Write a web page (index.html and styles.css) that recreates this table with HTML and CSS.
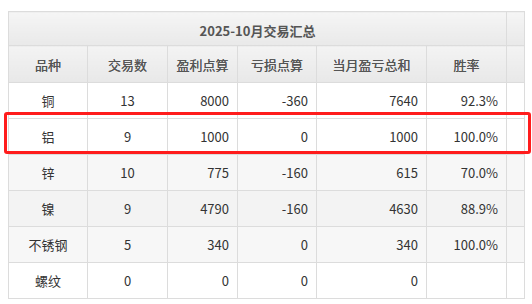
FILE: index.html
```html
<!DOCTYPE html>
<html lang="zh-CN">
<head>
<meta charset="utf-8">
<link rel="stylesheet" href="styles.css">
</head>
<body>
<div class="wrap">
  <table class="summary">
    <colgroup>
      <col class="c1"><col class="c2"><col class="c3"><col class="c4"><col class="c5"><col class="c6"><col class="c7">
    </colgroup>
    <thead>
      <tr class="title-row"><th colspan="6">2025-10月交易汇总</th><th></th></tr>
      <tr class="head-row"><th>品种</th><th>交易数</th><th>盈利点算</th><th>亏损点算</th><th>当月盈亏总和</th><th>胜率</th><th></th></tr>
    </thead>
    <tbody>
      <tr><td class="ctr">铜</td><td class="ctr">13</td><td class="num">8000</td><td class="num">-360</td><td class="num">7640</td><td class="num">92.3%</td><td></td></tr>
      <tr><td class="ctr">铝</td><td class="ctr">9</td><td class="num">1000</td><td class="num">0</td><td class="num">1000</td><td class="num">100.0%</td><td></td></tr>
      <tr class="alt"><td class="ctr">锌</td><td class="ctr">10</td><td class="num">775</td><td class="num">-160</td><td class="num">615</td><td class="num">70.0%</td><td></td></tr>
      <tr class="alt2"><td class="ctr">镍</td><td class="ctr">9</td><td class="num">4790</td><td class="num">-160</td><td class="num">4630</td><td class="num">88.9%</td><td></td></tr>
      <tr class="alt"><td class="ctr">不锈钢</td><td class="ctr">5</td><td class="num">340</td><td class="num">0</td><td class="num">340</td><td class="num">100.0%</td><td></td></tr>
      <tr><td class="ctr">螺纹</td><td class="ctr">0</td><td class="num">0</td><td class="num">0</td><td class="num">0</td><td class="num"></td><td></td></tr>
    </tbody>
  </table>
  <div class="highlight"></div>
</div>
</body>
</html>
```
FILE: styles.css
```css
html, body {
  margin: 0;
  padding: 0;
  background: #fff;
}
body {
  font-family: "Microsoft YaHei", "Noto Sans CJK SC", "Noto Sans", sans-serif;
  font-size: 13px;
  color: #333;
}
.wrap {
  position: relative;
  padding: 11px 8px 0 8px;
  width: 516px;
}
.summary {
  border-collapse: collapse;
  table-layout: fixed;
  width: 516px;
}
.c1 { width: 79px; }
.c2 { width: 80px; }
.c3 { width: 70px; }
.c4 { width: 79px; }
.c5 { width: 110px; }
.c6 { width: 80px; }
.c7 { width: 18px; }
.summary th,
.summary td {
  border: 1px solid #dcdcdc;
  padding: 0 8px;
  white-space: nowrap;
  overflow: hidden;
}
.title-row th {
  height: 34px;
  padding-top: 3px;
  box-sizing: border-box;
  background: linear-gradient(#f5f5f5, #e9e9e9);
  font-weight: bold;
  color: #555;
  text-align: center;
}
.head-row th {
  height: 36px;
  background: linear-gradient(#f3f3f3, #e8e8e8);
  font-weight: normal;
  color: #555;
  text-align: center;
  text-shadow: 0 0 0.3px #555;
}
.summary tbody td {
  height: 35px;
}
.ctr { text-align: center; }
.num { text-align: right; }
.alt td { background: #f7f7f7; }
.alt2 td { background: #f3f3f3; }
.highlight {
  position: absolute;
  left: 4px;
  top: 112px;
  width: 521px;
  height: 36px;
  border: 3px solid #ff1c1c;
  border-radius: 3px;
}
```
